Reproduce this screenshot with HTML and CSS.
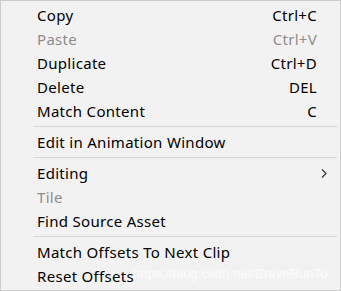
FILE: index.html
```html
<!DOCTYPE html>
<html>
<head>
<meta charset="utf-8">
<link rel="stylesheet" href="styles.css">
</head>
<body>
<div class="menu">
  <div class="item"><span class="label">Copy</span><span class="key">Ctrl+C</span></div>
  <div class="item disabled"><span class="label">Paste</span><span class="key">Ctrl+V</span></div>
  <div class="item"><span class="label">Duplicate</span><span class="key">Ctrl+D</span></div>
  <div class="item"><span class="label">Delete</span><span class="key">DEL</span></div>
  <div class="item"><span class="label">Match Content</span><span class="key">C</span></div>
  <div class="sep"></div>
  <div class="item"><span class="label">Edit in Animation Window</span></div>
  <div class="sep"></div>
  <div class="item"><span class="label">Editing</span><svg class="arrow" width="6" height="9" viewBox="0 0 6 9"><path d="M1 0.5 L5 4.5 L1 8.5" fill="none" stroke="#333" stroke-width="1.2"/></svg></div>
  <div class="item disabled"><span class="label">Tile</span></div>
  <div class="item"><span class="label">Find Source Asset</span></div>
  <div class="sep"></div>
  <div class="item"><span class="label">Match Offsets To Next Clip</span></div>
  <div class="item"><span class="label">Reset Offsets</span></div>
  <div class="watermark">https://blog.csdn.net/BraveRunTo</div>
</div>
</body>
</html>
```

FILE: styles.css
```css
html, body {
  margin: 0;
  padding: 0;
}
.menu {
  position: relative;
  width: 341px;
  height: 291px;
  box-sizing: border-box;
  border: 1px solid #cccccc;
  background: #f2f2f2;
  padding-top: 2px;
  font-family: "Noto Sans", "Liberation Sans", sans-serif;
  font-size: 15px;
  letter-spacing: 0.3px;
  color: #000;
  overflow: hidden;
}
.item {
  display: flex;
  align-items: center;
  height: 24px;
  padding-left: 36px;
  padding-right: 23px;
}
.label {
  flex: 1;
}
.key {
  text-align: right;
}
.disabled {
  color: #8d8d8d;
}
.arrow {
  margin-right: -10px;
}
.sep {
  height: 1px;
  background: #d7d7d7;
  margin: 3px 3px 3px 32px;
}
.watermark {
  position: absolute;
  left: 132px;
  top: 265px;
  font-family: "Liberation Sans", sans-serif;
  font-size: 13px;
  letter-spacing: 0.1px;
  color: rgba(255,255,255,0.75);
  white-space: nowrap;
}
```
